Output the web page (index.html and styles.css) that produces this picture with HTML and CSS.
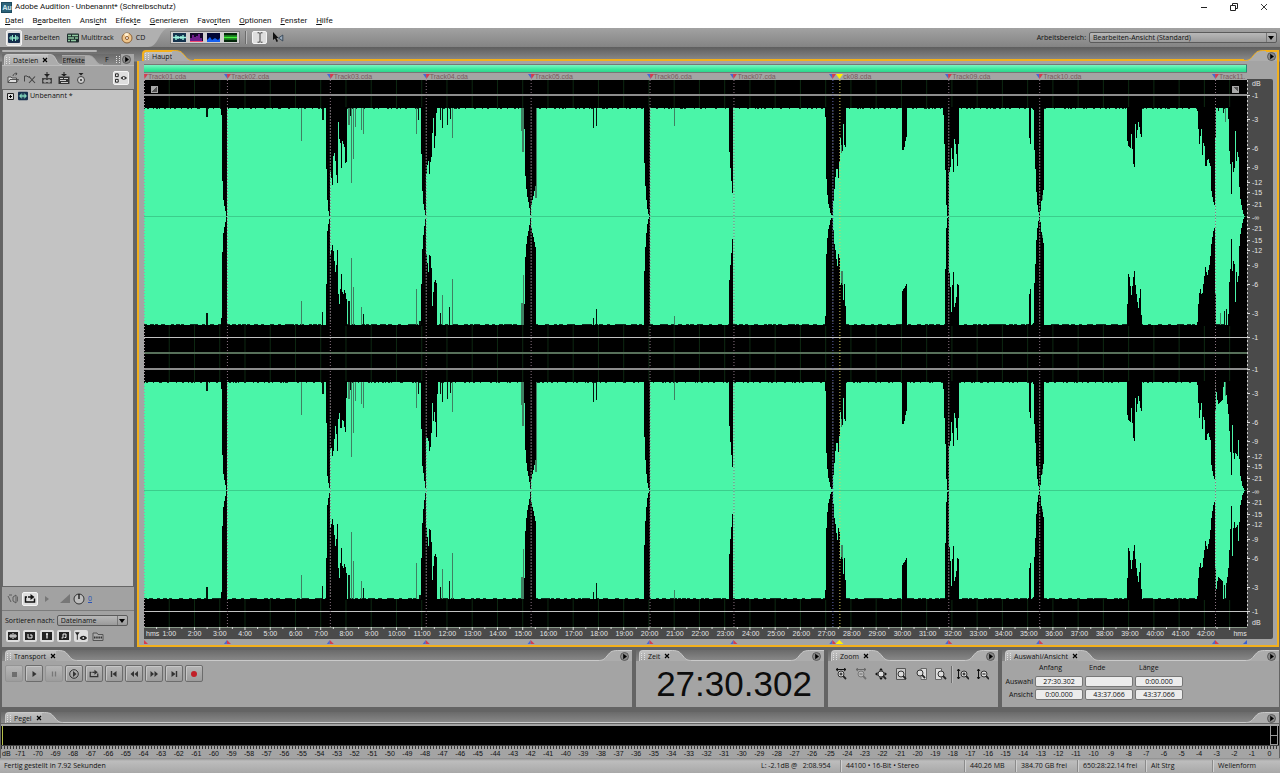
FILE: index.html
```html
<!DOCTYPE html>
<html lang="de">
<head>
<meta charset="utf-8">
<title>Adobe Audition - Unbenannt* (Schreibschutz)</title>
<link rel="stylesheet" href="styles.css">
</head>
<body>
<svg class="defs" aria-hidden="true">
  <symbol id="slope" viewBox="0 0 22 11" preserveAspectRatio="none"><path class="slope-fill" d="M0 .5C8 .5 9 1 13 6C16 10 18 10.5 22 10.5V11H0Z"/><path class="slope-line" d="M0 .5C8 .5 9 1 13 6C16 10 18 10.5 22 10.5"/></symbol>
  <symbol id="slope-r" viewBox="0 0 22 11" preserveAspectRatio="none"><path class="slope-fill" d="M22 .5C14 .5 13 1 9 6C6 10 4 10.5 0 10.5V11H22Z"/><path class="slope-line" d="M22 .5C14 .5 13 1 9 6C6 10 4 10.5 0 10.5"/></symbol>
  <symbol id="flyout" viewBox="0 0 9 9"><circle cx="4.500" cy="4.500" r="4" fill="#8a8a8a" stroke="#4c4c4c" stroke-width=".8"/><path d="M3.200 1.800L7 4.500L3.200 7.200Z" fill="#000"/></symbol>
  <symbol id="close" viewBox="0 0 6 6"><path d="M1 1L5 5M5 1L1 5" stroke="#000" stroke-width="1.200"/></symbol>
  <symbol id="wave" viewBox="0 0 12 10"><rect width="12" height="10" rx="1" fill="#17304e"/><path d="M1 5H11M3 3V7M4.500 2V8M6 4V6M7.500 2V8M9 3V7" stroke="#8fe8c8" stroke-width="1"/></symbol>
  <symbol id="multi" viewBox="0 0 12 9"><rect width="12" height="9" rx="1" fill="#1c2c2c"/><path d="M1 2H4M5 2H11M1 4.500H7M8 4.500H11M1 7H3M4 7H9" stroke="#8fc9a0" stroke-width="1.300"/></symbol>
  <symbol id="loop" viewBox="0 0 12 10"><path d="M3 3H1.500V8H10.500V4.500" fill="none" stroke="currentColor" stroke-width="1.500"/><path d="M4 3H7" stroke="currentColor" stroke-width="1.500"/><path d="M6.500 0L10.500 3L6.500 6Z" fill="currentColor"/></symbol>
  <symbol id="lens" viewBox="0 0 12 12"><circle cx="6" cy="6" r="3" fill="#ddd" stroke="#333"/><path d="M8.200 8.200L11 11" stroke="#222" stroke-width="1.800"/></symbol>
</svg>

<header class="titlebar">
  <svg class="logo" viewBox="0 0 11 11" aria-hidden="true"><rect width="11" height="11" fill="#1d4a5e"/><rect x="1" y="1" width="9" height="9" fill="#2d6379"/><text x="1.500" y="8" class="logo-text">Au</text></svg>
  <h1>Adobe Audition - Unbenannt* (Schreibschutz)</h1>
  <div class="winbtns">
    <button aria-label="Minimieren"><svg viewBox="0 0 8 8"><path d="M1 4.500H7" stroke="#222"/></svg></button>
    <button aria-label="Wiederherstellen"><svg viewBox="0 0 8 8"><path d="M.5 2.500H5.500V7.500H.5ZM2.500 2.500V.5H7.500V5.500H5.500" fill="none" stroke="#222"/></svg></button>
    <button aria-label="Schließen"><svg viewBox="0 0 8 8"><path d="M1 1L7 7M7 1L1 7" stroke="#222" stroke-width=".9"/></svg></button>
  </div>
</header>
<nav class="menubar">
  <button><u>D</u>atei</button><button>B<u>e</u>arbeiten</button><button>Ansi<u>c</u>ht</button><button>Effek<u>t</u>e</button><button><u>G</u>enerieren</button><button>Favo<u>r</u>iten</button><button><u>O</u>ptionen</button><button><u>F</u>enster</button><button><u>H</u>ilfe</button>
</nav>

<div class="toolbar">
  <div class="modes">
    <button class="mode"><span class="pressed"><svg class="i12"><use href="#wave"/></svg></span>Bearbeiten</button>
    <button class="mode"><svg class="i12"><use href="#multi"/></svg>Multitrack</button>
    <button class="mode cd"><svg class="i12" viewBox="0 0 12 12"><circle cx="6" cy="6" r="5" fill="#f0c58a" stroke="#8a6238"/><path d="M6 6L3 2A5 5 0 0 1 8 1.500Z" fill="#fff0d2"/><circle cx="6" cy="6" r="1.500" fill="#fff" stroke="#8a5a30"/></svg>CD</button>
  </div>
  <svg class="toolslope" viewBox="0 0 22 19" aria-hidden="true"><path d="M0 19C12 19 10 0 22 0H0Z" fill="#b0b0b0"/></svg>
  <div class="views">
    <button aria-label="Wellenform"><svg viewBox="0 0 13 9"><rect width="13" height="9" fill="#14324d"/><path d="M0 4.500H13M3 2V7M5 3V6M8 3V6M10 2V7" stroke="#9df5df" stroke-width="1.400"/></svg></button>
    <button aria-label="Spektrum"><svg viewBox="0 0 13 9"><rect width="13" height="9" fill="#120828"/><path d="M1 9V5M3 9V2M5 9V4M7 9V3M9 9V1M11 9V5" stroke="#a02cc0" stroke-width="1.300"/><path d="M0 8.500H13" stroke="#f04a70"/></svg></button>
    <button aria-label="Pan"><svg viewBox="0 0 13 9"><rect width="13" height="9" fill="#020835"/><path d="M0 7L3 4L5 7L8 5L11 7L13 5V9H0Z" fill="#1560f0"/></svg></button>
    <button aria-label="Phase"><svg viewBox="0 0 13 9"><rect width="13" height="9" fill="#04260a"/><path d="M0 4.500H13" stroke="#41f33c" stroke-width="2"/><path d="M0 2.500H13M0 6.500H13" stroke="#1b8a22" stroke-width=".8"/></svg></button>
  </div>
  <span class="divider"></span>
  <button class="pressed ibeam" aria-label="Zeitauswahl"><svg viewBox="0 0 10 11"><path d="M2.500 .8H4.300L5 1.500L5.700 .8H7.500M5 1.500V9.500M2.500 10.200H4.300L5 9.500L5.700 10.200H7.500" fill="none" stroke="#333" stroke-width=".9"/></svg></button>
  <button class="scrub" aria-label="Scrubben"><svg viewBox="0 0 12 11"><path d="M1 0V8L3 6.500L4.500 10L6 9.300L4.500 6H6.500Z" fill="#111"/><path d="M10.800 3V9L6.500 6Z" fill="#9ab" stroke="#345" stroke-width=".9"/></svg></button>
  <label class="workspace">Arbeitsbereich: <span class="select wide"><select><option>Bearbeiten-Ansicht (Standard)</option></select></span></label>
</div>

<main class="work">
  <section class="files">
    <div class="scrollhint"></div>
    <div class="filetabs">
      <div class="tab"><span class="grip"></span>Dateien <svg class="x"><use href="#close"/></svg></div><svg class="slope"><use href="#slope"/></svg>
      <button class="tab2">Effekte</button><svg class="slope dim"><use href="#slope"/></svg>
      <span class="tab3">F</span><span class="grip"></span><button class="fly" aria-label="Menü"><svg><use href="#flyout"/></svg></button>
    </div>
    <div class="filetools">
      <button aria-label="Importieren"><svg viewBox="0 0 12 12"><path d="M1 10.500V5H4L5 6H9.500V10.500ZM1 10.500L3 7.500H11.500L9.500 10.500" fill="#ddd" stroke="#444" stroke-width=".9"/><path d="M6 4C6 2 8 1 10 2L9 .5M10 2L8.500 3" fill="none" stroke="#444" stroke-width=".9"/></svg></button>
      <button aria-label="Schließen"><svg viewBox="0 0 12 12"><path d="M.5 9.500V4H3L4 5H6" fill="none" stroke="#444"/><path d="M5 4.500L11 11M11 4.500L5 11" stroke="#444" stroke-width="1.100"/></svg></button>
      <button aria-label="Bearbeiten"><svg viewBox="0 0 12 12"><path d="M3 2H9L6 5Z" fill="#222"/><path d="M6 0V6" stroke="#222"/><rect x="1" y="6" width="10" height="5.500" fill="#444"/><path d="M2 9H10M4 7V11M6 8V10M8 7V11" stroke="#ddd" stroke-width=".8"/></svg></button>
      <button aria-label="Einfügen"><svg viewBox="0 0 12 12"><path d="M3 2H9L6 4.500Z" fill="#222"/><path d="M6 0V4" stroke="#222"/><rect x=".5" y="4.500" width="11" height="7.500" fill="#333"/><path d="M2 6.500H5M6 6.500H10M2 8.500H8M3 10.500H10" stroke="#ccc"/></svg></button>
      <button aria-label="CD"><svg viewBox="0 0 12 12"><path d="M3.500 1H8.500L6 3.500Z" fill="#222"/><circle cx="6" cy="8" r="3.500" fill="#ccc" stroke="#444"/><circle cx="6" cy="8" r="1" fill="#333"/></svg></button>
      <button class="pressed opt" aria-label="Optionen"><svg viewBox="0 0 13 11"><path d="M.5 1H3.500V4H.5ZM.5 7H3.500V10H.5Z" fill="#eee" stroke="#111"/><path d="M6 5.500C8 3 11 3 13 5.500C11 8 8 8 6 5.500Z" fill="#333"/><circle cx="9.500" cy="5.500" r="1" fill="#fff"/></svg></button>
    </div>
    <div class="filelist"><div class="file"><svg class="plus" viewBox="0 0 7 7"><path d="M.5 .5H6.500V6.500H.5Z" fill="#ddd" stroke="#222"/><path d="M2 3.500H5M3.500 2V5" stroke="#000"/></svg><svg class="i10"><use href="#wave"/></svg>Unbenannt *</div></div>
    <div class="preview">
      <button aria-label="Auto-Wiedergabe"><svg viewBox="0 0 12 10"><path d="M1 2L4 8M2 1H5M6 3L9 1V9L6 7Z" stroke="#555" fill="none" stroke-width=".9"/><path d="M10.500 2.500V7.500" stroke="#666"/></svg></button>
      <button class="pressed" aria-label="Schleife"><svg class="i10"><use href="#loop"/></svg></button>
      <button aria-label="Wiedergabe"><svg viewBox="0 0 12 10"><path d="M4 2L8 5L4 8Z" fill="#777"/></svg></button>
      <svg class="vol" viewBox="0 0 10 9"><path d="M0 9H10V0Z" fill="#777"/></svg>
      <svg class="knob" viewBox="0 0 12 12"><circle cx="6" cy="6" r="5" fill="#bdbdbd" stroke="#333"/><path d="M6 1V6" stroke="#111" stroke-width="1.300"/></svg>
      <a href="#gain">0</a>
    </div>
    <div class="sort"><label for="sort">Sortieren nach:</label><span class="select"><select id="sort"><option>Dateiname</option></select></span></div>
    <div class="filters">
      <button aria-label="Audio"><svg viewBox="0 0 10 8"><rect width="10" height="8" fill="#222"/><path d="M1 4H9M3 2V6M5 1V7M7 2V6" stroke="#eee"/></svg></button>
      <button aria-label="Loops"><svg viewBox="0 0 10 8"><rect width="10" height="8" fill="#222"/><path d="M3 2V6H7V3H5" stroke="#eee" fill="none"/></svg></button>
      <button aria-label="Video"><svg viewBox="0 0 10 8"><rect width="10" height="8" fill="#222"/><path d="M5 1.500V6.500M4 2H6" stroke="#eee" stroke-width="1.300"/></svg></button>
      <button aria-label="MIDI"><svg viewBox="0 0 10 8"><rect width="10" height="8" fill="#222"/><path d="M4 6V2H7V5.500M2.500 6H4M5.500 5.500H7" stroke="#eee" fill="none"/></svg></button>
      <button class="mark" aria-label="Marken"><svg viewBox="0 0 13 9"><path d="M0 0H5L3 3V8H2V3Z" fill="#222"/><path d="M5 6C7 3 11 3 13 6C11 9 7 9 5 6Z" fill="#222"/><circle cx="9" cy="6" r="1" fill="#eee"/></svg></button>
      <button class="plain" aria-label="Pfad"><svg viewBox="0 0 12 9"><path d="M1 8.500V1H5L6 2.500H11V8.500Z" fill="#aaa" stroke="#555"/><path d="M2 5.500H10" stroke="#333" stroke-width="2" stroke-dasharray="1.500 .7"/></svg></button>
    </div>
  </section>

  <section class="wavepanel">
    <div class="head">
      <div class="tab"><span class="grip"></span>Haupt</div><svg class="slope"><use href="#slope"/></svg>
      <div class="fill"></div>
      <svg class="slope"><use href="#slope-r"/></svg><div class="tail"><button class="fly" aria-label="Menü"><svg><use href="#flyout"/></svg></button></div>
    </div>
    <div class="wavebody">
      <div class="wavecol">
        <div class="overview"><div class="overview-bar"></div></div>
        <div class="tracks" id="tracks"></div>
        <svg class="plot" id="plot" viewBox="0 0 1104 547" preserveAspectRatio="none" role="img" aria-label="Wellenform"></svg>
        <svg class="ticks" id="ticks" viewBox="0 0 1104 3" preserveAspectRatio="none"></svg>
        <div class="timeruler" id="timeruler"></div>
      </div>
      <div class="dbcol"><svg class="dbticks" id="dbticks" viewBox="0 0 5 547" preserveAspectRatio="none"></svg><div class="dbscale" id="dbscale"></div></div>
      <svg class="cues" id="cues" viewBox="0 0 1104 6" preserveAspectRatio="none"></svg>
    </div>
  </section>
</main>

<div class="lower">
  <section class="panel transport">
    <div class="head"><div class="tab"><span class="grip"></span>Transport <svg class="x"><use href="#close"/></svg></div><svg class="slope"><use href="#slope"/></svg><div class="fill"></div><svg class="slope"><use href="#slope-r"/></svg><div class="tail"><button class="fly" aria-label="Menü"><svg><use href="#flyout"/></svg></button></div></div>
    <div class="body">
      <button disabled aria-label="Stopp"><svg viewBox="0 0 10 10"><path d="M3 3H8V8H3Z" fill="#6e6e6e"/></svg></button>
      <button aria-label="Wiedergabe"><svg viewBox="0 0 10 10"><path d="M3.500 2L7.500 5L3.500 8Z" fill="#333"/></svg></button>
      <button disabled aria-label="Pause"><svg viewBox="0 0 10 10"><path d="M3.500 2.500V7.500M6.500 2.500V7.500" stroke="#777" stroke-width="1.300"/></svg></button>
      <button aria-label="Wiedergabe bis Ende"><svg viewBox="0 0 10 10"><circle cx="5" cy="5" r="4.300" fill="none" stroke="#333"/><path d="M4 2L7.500 5L4 8Z" fill="#333"/></svg></button>
      <button aria-label="Schleife"><svg><use href="#loop"/></svg></button>
      <button aria-label="Anfang"><svg viewBox="0 0 10 10"><path d="M2.500 2V8" stroke="#333" stroke-width="1.400"/><path d="M7.500 2V8L3.500 5Z" fill="#333"/></svg></button>
      <button aria-label="Rückspulen"><svg viewBox="0 0 10 10"><path d="M5 2V8L1.500 5ZM9 2V8L5.500 5Z" fill="#333"/></svg></button>
      <button aria-label="Vorspulen"><svg viewBox="0 0 10 10"><path d="M1.500 2V8L5 5ZM5.500 2V8L9 5Z" fill="#333"/></svg></button>
      <button aria-label="Ende"><svg viewBox="0 0 10 10"><path d="M2.500 2V8L6.500 5Z" fill="#333"/><path d="M7.500 2V8" stroke="#333" stroke-width="1.400"/></svg></button>
      <button aria-label="Aufnahme"><svg viewBox="0 0 10 10"><circle cx="5" cy="5" r="3" fill="#c11f28"/></svg></button>
    </div>
  </section>
  <section class="panel time">
    <div class="head"><div class="tab"><span class="grip"></span>Zeit <svg class="x"><use href="#close"/></svg></div><svg class="slope"><use href="#slope"/></svg><div class="fill"></div><svg class="slope"><use href="#slope-r"/></svg><div class="tail"><button class="fly" aria-label="Menü"><svg><use href="#flyout"/></svg></button></div></div>
    <div class="body"><output>27:30.302</output></div>
  </section>
  <section class="panel zoom">
    <div class="head"><div class="tab"><span class="grip"></span>Zoom <svg class="x"><use href="#close"/></svg></div><svg class="slope"><use href="#slope"/></svg><div class="fill"></div><svg class="slope"><use href="#slope-r"/></svg><div class="tail"><button class="fly" aria-label="Menü"><svg><use href="#flyout"/></svg></button></div></div>
    <div class="body">
      <button aria-label="Horizontal einzoomen"><svg viewBox="0 0 12 12"><path d="M1 1.500H11M3 0L1 1.500L3 3M9 0L11 1.500L9 3" fill="none" stroke="#111"/><use href="#lens"/><path d="M4.500 6H7.500M6 4.500V7.500" stroke="#111"/></svg></button>
      <button class="off" aria-label="Horizontal auszoomen"><svg viewBox="0 0 12 12"><path d="M1 1.500H11M3 0L1 1.500L3 3M9 0L11 1.500L9 3" fill="none" stroke="#111"/><use href="#lens"/><path d="M4.500 6H7.500" stroke="#111"/></svg></button>
      <button aria-label="Ganz auszoomen"><svg viewBox="0 0 12 12"><use href="#lens"/><path d="M6 0L8 2.500H4ZM6 12L8 9.500H4ZM0 6L2.500 4V8ZM12 6L9.500 4V8Z" fill="#111"/></svg></button>
      <button aria-label="Auswahl"><svg viewBox="0 0 12 12"><path d="M1.500 .5H10.500V11.500H1.500Z" fill="#c8c8c8" stroke="#555"/><use href="#lens"/></svg></button>
      <button aria-label="Linker Rand"><svg viewBox="0 0 12 12"><path d="M6 .5H11.500V11.500H6Z" fill="#ddd" stroke="#666"/><use href="#lens" x="-1" y="-1"/></svg></button>
      <button aria-label="Rechter Rand"><svg viewBox="0 0 12 12"><path d="M.5 .5H6.500V11.500H.5Z" fill="#ddd" stroke="#666"/><use href="#lens"/></svg></button>
      <span class="divider"></span>
      <button aria-label="Vertikal einzoomen"><svg viewBox="0 0 12 12"><path d="M1.500 1V11M0 3L1.500 1L3 3M0 9L1.500 11L3 9" fill="none" stroke="#111"/><use href="#lens" x="1"/><path d="M5.500 6H8.500M7 4.500V7.500" stroke="#111"/></svg></button>
      <button aria-label="Vertikal auszoomen"><svg viewBox="0 0 12 12"><path d="M1.500 1V11M0 3L1.500 1L3 3M0 9L1.500 11L3 9" fill="none" stroke="#111"/><use href="#lens" x="1"/><path d="M5.500 6H8.500" stroke="#111"/></svg></button>
    </div>
  </section>
  <section class="panel selection">
    <div class="head"><div class="tab"><span class="grip"></span>Auswahl/Ansicht <svg class="x"><use href="#close"/></svg></div><svg class="slope"><use href="#slope"/></svg><div class="fill"></div><svg class="slope"><use href="#slope-r"/></svg><div class="tail"><button class="fly" aria-label="Menü"><svg><use href="#flyout"/></svg></button></div></div>
    <div class="body">
      <span></span><span class="col">Anfang</span><span class="col">Ende</span><span class="col">Länge</span>
      <label for="s1">Auswahl</label><input id="s1" value="27:30.302"><input aria-label="Auswahl Ende" value=""><input aria-label="Auswahl Länge" value="0:00.000">
      <label for="v1">Ansicht</label><input id="v1" value="0:00.000"><input aria-label="Ansicht Ende" value="43:37.066"><input aria-label="Ansicht Länge" value="43:37.066">
    </div>
  </section>
</div>

<section class="panel level">
  <div class="head"><div class="tab"><span class="grip"></span>Pegel <svg class="x"><use href="#close"/></svg></div><svg class="slope"><use href="#slope"/></svg><div class="fill"></div><svg class="slope"><use href="#slope-r"/></svg><div class="tail"><button class="fly" aria-label="Menü"><svg><use href="#flyout"/></svg></button></div></div>
  <div class="meter"><span class="meter-start"></span><span class="clip"><i></i><i></i></span></div>
  <div class="lvticks"></div>
  <div class="lvscale" id="lvscale"></div>
</section>

<footer class="status">
  <span class="msg">Fertig gestellt in 7.92 Sekunden</span>
  <span class="st-level">L: -2.1dB @ &nbsp; 2:08.954</span>
  <span class="st-format">44100 • 16-Bit • Stereo</span>
  <span class="st-size">440.26 MB</span>
  <span class="st-free">384.70 GB frei</span>
  <span class="st-time">650:28:22.14 frei</span>
  <span class="st-key">Alt Strg</span>
  <span class="st-view">Wellenform</span>
</footer>
<script src="script.js"></script>
</body>
</html>
```

FILE: styles.css
```css
* { box-sizing: border-box; }
html { height: 100%; }
body {
  margin: 0; min-height: 100%; display: flex; flex-direction: column;
  background: #646464; color: #111;
  font: 7px/10px "Open Sans", "Noto Sans", sans-serif;
}
button, input, select { font: inherit; color: inherit; }
button { border: 0; padding: 0; margin: 0; background: none; display: inline-flex; align-items: center; justify-content: center; }
svg { display: block; flex: none; }
.defs { position: absolute; width: 0; height: 0; }
.i12 { width: 12px; height: 12px; }
.i10 { width: 10px; height: 10px; }

.titlebar { height: 14px; background: #fff; display: flex; align-items: center; padding-left: 1px; }
.logo { width: 11px; height: 11px; margin-right: 3px; }
.logo-text { font: bold 7px "Open Sans", sans-serif; fill: #cfe6ee; }
.titlebar h1 { margin: 0; flex: 1; font: 400 8px/14px Roboto, "Open Sans", sans-serif; }
.winbtns { display: flex; gap: 22px; padding-right: 12px; }
.winbtns svg { width: 8px; height: 8px; }
.menubar { height: 14px; background: #fff; display: flex; gap: 9px; padding: 0 5px; font: 8px/14px Roboto, "Open Sans", sans-serif; }
.menubar button { display: inline-block; line-height: 14px; }

.toolbar { height: 19px; display: flex; align-items: center; background: linear-gradient(#a2a2a2, #848484); }
.modes { align-self: stretch; display: flex; align-items: center; gap: 7px; padding: 0 3px 0 6px; background: #b0b0b0; }
.mode { gap: 2px; }
.mode.cd { gap: 3px; }
.pressed { background: #dedede; border: 1px solid #f4f4f4; border-radius: 2px; display: inline-flex; align-items: center; justify-content: center; }
.mode .pressed { padding: 1px; }
.toolslope { width: 22px; height: 19px; }
.views { display: flex; border: 1px solid #777; background: #cfcfcf; }
.views button { width: 17px; height: 11px; }
.views svg { width: 13px; height: 9px; }
.divider { width: 2px; height: 13px; border-left: 1px solid #6b6b6b; border-right: 1px solid #bbb; }
.toolbar .divider { margin: 0 5px; }
.ibeam { width: 15px; height: 13px; }
.ibeam svg, .scrub svg { width: 12px; height: 11px; }
.scrub { margin-left: 5px; }
.workspace { margin-left: auto; display: flex; align-items: center; gap: 3px; padding-right: 3px; }
.select { display: flex; position: relative; border: 1px solid #5b5b5b; border-radius: 2px; background: linear-gradient(#b8b8b8, #9a9a9a); }
.select select { appearance: none; border: 0; margin: 0; padding: 0 12px 0 3px; width: 100%; height: 9px; line-height: 9px; background: none; }
.select::after { content: ""; position: absolute; right: 2px; top: 3px; border: 3px solid transparent; border-top: 4px solid #000; border-bottom: 0; }
.select::before { content: ""; position: absolute; right: 9px; top: 0; bottom: 0; border-left: 1px solid #777; }
.select.wide { width: 188px; }

.work { flex: 1; display: flex; gap: 3px; padding: 3px 1px 2px 2px; background: linear-gradient(#5e5e5e, #8c8c8c 14px, #646464 15px); }
.files { width: 132px; display: flex; flex-direction: column; }
.scrollhint { width: 95px; height: 2px; background: #b5b5b5; border-radius: 1px; margin-bottom: 2px; }
.filetabs { height: 11px; display: flex; align-items: flex-end; background: linear-gradient(#6a6a6a, #8a8a8a); }
.grip { width: 4px; height: 7px; margin-right: 3px; border: 1px dotted #e2e2e2; border-width: 0 1px; }
.tab { height: 11px; padding-left: 1px; display: flex; align-items: center; background: linear-gradient(#c2c2c2, #a6a6a6); border: 1px solid #cacaca; border-width: 1px 0 0 1px; border-radius: 4px 0 0 0; line-height: 9px; }
.x { width: 6px; height: 6px; margin-left: 4px; }
.slope { width: 22px; height: 11px; color: #cacaca; }
.slope-fill { fill: #acacac; }
.slope-line { fill: none; stroke: currentColor; stroke-width: 1; }
.files .tab { margin-left: 2px; }
.files .slope { width: 14px; }
.files .dim { width: 18px; height: 10px; color: #aaa; }
.dim .slope-fill, .dim { fill: #8e8e8e; }
.tab2 { height: 10px; background: #8e8e8e; border-top: 1px solid #aaa; line-height: 9px; }
.tab3 { flex: 1; padding-left: 2px; }
.filetabs > .grip { margin: 0 1px 2px; }
.fly svg { width: 9px; height: 9px; }
.filetabs .fly { padding: 1px 3px 1px 1px; background: #a6a6a6; }
.filetools { height: 24px; display: flex; align-items: center; gap: 5px; padding: 0 5px; background: #a2a2a2; border-top: 1px solid #bcbcbc; }
.filetools svg { width: 12px; height: 12px; }
.filetools .opt { margin-left: auto; padding: 0 1px; }
.filelist { flex: 1; background: #c3c3c3; border: 1px solid #666; }
.file { display: flex; align-items: center; gap: 2px; padding: 1px 4px; line-height: 10px; }
.plus { width: 7px; height: 7px; }
.file .plus { margin-right: 2px; }
.preview { height: 24px; display: flex; align-items: center; gap: 3px; padding: 0 5px; background: #a2a2a2; border-bottom: 1px solid #7c7c7c; }
.preview button svg { width: 12px; height: 10px; }
.preview .pressed { padding: 1px; }
.vol { width: 10px; height: 9px; margin-left: 4px; }
.knob { width: 12px; height: 12px; }
.preview a { color: #2952b8; }
.sort { display: flex; align-items: center; gap: 2px; padding: 4px 6px 4px 3px; background: #a2a2a2; }
.sort .select { flex: 1; }
.filters { height: 17px; display: flex; gap: 3px; padding: 0 4px 5px; background: #a2a2a2; }
.filters button { width: 14px; height: 12px; background: #dedede; border-radius: 2px; }
.filters svg { width: 10px; height: 8px; }
.filters .mark svg, .filters .plain svg { width: 12px; height: 9px; }
.filters .plain { background: none; }

.head { display: flex; height: 11px; background: linear-gradient(#6a6a6a, #8a8a8a); }
.fill { flex: 1; border-bottom: 1px solid #cacaca; }
.tail { border-top: 1px solid #cacaca; background: #acacac; padding: 0 3px 0 0; display: flex; }
.wavepanel { flex: 1; min-width: 0; display: flex; flex-direction: column; }
.wavepanel .head { margin-left: 5px; background: none; }
.wavepanel .tab { border-color: #f3b01c; border-width: 2px 0 0 2px; }
.wavepanel .slope { color: #f3b01c; }
.wavepanel .slope-line { stroke-width: 2; }
.wavepanel .fill { border-bottom: 2px solid #f3b01c; }
.wavepanel .tail { border: 2px solid #f3b01c; border-width: 2px 2px 0 0; padding: 0 1px; }
.wavebody { flex: 1; display: grid; grid-template-columns: 1fr 26px; grid-template-rows: 1fr 6px; padding: 3px 4px 0 5px; background: #a4a4a4; border: 2px solid #f3b01c; border-top: 0; }
.wavecol { min-width: 0; display: flex; flex-direction: column; }
.overview { height: 9px; padding: 1px 0; background: #777; }
.overview-bar { height: 7px; background: linear-gradient(#7cf5c2, #3be89c 60%, #2fd48c); border-right: 1px solid #287; }
.tracks { height: 7px; display: flex; color: #7a5a5c; font: 7px/7px "Liberation Sans", Arial, sans-serif; }
.track { flex: 1 1 0; min-width: 0; display: flex; white-space: nowrap; }
.track svg { width: 7px; height: 5px; margin-top: 1px; margin-left: -3px; }
.plot { width: 100%; flex: 1 1 0; min-height: 0; height: 0; background: #000; }
.ticks { width: 100%; height: 3px; background: #4a4a4a; }
.timeruler { height: 9px; display: flex; background: #4a4a4a; color: #e4e4e4; font: 7px/8px "Liberation Sans", Arial, sans-serif; }
.timeruler span { flex: 1 1 0; min-width: 0; display: flex; justify-content: center; }
.timeruler .first { flex-grow: .5; justify-content: flex-start; text-indent: 2px; }
.timeruler .last { flex-grow: 1.117; justify-content: flex-end; }
.dbcol { display: flex; margin-top: 15px; background: #4a4a4a; color: #e4e4e4; border-radius: 0 2px 2px 0; font: 7px/8px "Liberation Sans", Arial, sans-serif; padding: 1px 0 12px; }
.dbticks { width: 5px; height: 100%; }
.dbscale { flex: 1; display: flex; flex-direction: column; }
.dbscale span { height: 0; line-height: 0; }
.cues { width: 100%; height: 6px; overflow: visible; }

.lower { display: grid; grid-template-columns: 630fr 188fr 170fr 277fr; gap: 4px; padding: 1px 1px 0 2px; }
.panel { min-width: 0; display: flex; flex-direction: column; }
.lower .body { height: 46px; background: #a4a4a4; display: flex; }
.lower .tab { margin-left: 3px; }
.transport .body { padding: 4px 3px; gap: 2px; }
.transport .body button { width: 18px; height: 17px; background: linear-gradient(#b6b6b6, #9c9c9c); border: 1px solid #6c6c6c; border-radius: 2px; box-shadow: inset 1px 1px #c6c6c6; }
.transport .body button:disabled { border-color: #949494; box-shadow: none; }
.transport .body svg { width: 10px; height: 10px; color: #333; }
.time .body { justify-content: center; padding-left: 8px; }
.time output { font: 35px/46px "Liberation Sans", Arial, sans-serif; color: #0c0c0c; }
.zoom .body { padding: 7px 7px; gap: 8px; align-items: flex-start; }
.zoom .body svg { width: 12px; height: 12px; }
.zoom .divider { margin: -2px -4px 0; height: 17px; }
.off { opacity: .4; }
.selection .body { display: grid; grid-template-columns: 31px 48px 48px 48px; grid-template-rows: 12px 11px 11px; gap: 2px; padding: 1px 0; justify-content: start; align-items: center; }
.selection label { text-align: right; }
.selection .col { padding-left: 4px; }
.selection input { width: 48px; height: 11px; padding: 0; text-align: center; border: 1px solid #777; border-radius: 2px; background: #ececec; line-height: 9px; }

.level { margin: 5px 1px 0 1px; }
.level .tab { margin-left: 4px; }
.meter { height: 22px; border-top: 2px solid #a4a4a4; border-bottom: 1px solid #444; background: #000; margin-top: 1px; display: flex; justify-content: space-between; padding: 0 1px; }
.meter-start { width: 2px; border-left: 1px solid #b5bf4a; }
.clip { width: 8px; display: flex; flex-direction: column; border: 1px solid #999; border-width: 0 1px; }
.clip i { flex: 1; border-bottom: 1px solid #999; }
.lvticks { height: 3px; background: repeating-linear-gradient(90deg, #333 0 1px, #a4a4a4 1px 3px); }
.lvscale { height: 9px; display: flex; padding-right: 1px; background: #a4a4a4; font: 7px/9px "Liberation Sans", Arial, sans-serif; }
.lvscale span { flex: 1 1 0; min-width: 0; text-align: center; }
.lvscale .first { flex-grow: .6; }

.status { height: 15px; display: flex; align-items: center; background: linear-gradient(#8c8c8c, #bdbdbd 3px, #a8a8a8); }
.status span { border-left: 1px solid #d0d0d0; box-shadow: -1px 0 #8a8a8a; padding-left: 4px; white-space: nowrap; line-height: 12px; }
.status .msg { flex: 1; border: 0; box-shadow: none; }
.status .st-level { width: 80px; border: 0; box-shadow: none; padding: 0; }
.st-format { width: 124px; }
.st-size { width: 51px; }
.st-free { width: 62px; }
.st-time { width: 68px; }
.st-key { width: 67px; }
.st-view { width: 67px; }
```

FILE: script.js
```js
const NS = "http://www.w3.org/2000/svg";
const X0 = 144, Y0 = 80, MIN = 25.27, LEVEL = 108;
const GREEN = "#4af5a8", SHADE = "#3f8062";

function shape(parent, name, attrs) {
  const el = document.createElementNS(NS, name);
  for (const key in attrs) el.setAttribute(key, attrs[key]);
  parent.appendChild(el);
  return el;
}

/* Dips of the envelope, as "x,depth" pairs; depth is measured from full level to the centre line. */
const common = [
  "221.5,0 222,40 222.5,70 223,88 225,100 226.5,108 227,108 227,0",
  "524.5,0 525.3,47 526,73 527.5,87 529.5,97 531,108 531,101 532.5,94 534.5,85 536,77 536.5,0",
  "644,0 644.5,37 645.3,67 646.7,90 648.3,104 649.7,108 650,108 650,0",
  "729.3,0 730,44 731.3,64 732.7,80 734,100 734,0",
  "1029.3,0 1030.7,42 1032,29 1032,0",
  "1034.3,0 1034.7,35 1036,49 1036.7,75 1038,95 1040,108 1041,107 1042,95 1043.7,85 1044.7,80 1044.7,0"
];
const upper = [
  "826,0 826.7,50 827.3,79 829,95 831.7,107 833.3,107 834,94 835.7,75 836.7,62 838,59 839,72 840,59 841,29 843.3,44 844.3,11 845.3,42 846.3,39 847,0",
  "902.7,0 903,42 904,43 905.3,39 906.7,30 908,28 908,0",
  "944,0 945,30 946,55 946.7,75 947.3,99 948.3,108 949.3,108 949.7,67 951.3,59 952.3,39 954.3,65 955,29 956.7,39 958.7,63 960,0",
  "1128,0 1128.7,57 1130,22 1130.7,50 1132.7,22 1133.7,49 1135.3,65 1136.3,14 1137.7,34 1139,12 1141.3,24 1142.3,42 1142.7,0",
  "1198.3,0 1199.3,19 1200.7,40 1202.3,15 1203.3,49 1205,29 1206.7,62 1209,49 1211.7,59 1212.3,82 1214,92 1216,99 1216.7,0"
];
const lower = [
  "826,0 826.7,50 827.3,79 829,95 831.7,107 833.3,107 834,97 835,82 836.7,71 838,57 839,72 840.7,64 841,40 843,43 844,22 845,44 847,0",
  "902.7,0 903,34 905.3,37 907.3,41 908,0",
  "945.5,0 946.3,60 947.3,99 948.3,108 949.3,108 949.7,59 951.3,37 952.3,12 954,62 955.3,16 957.7,31 959,54 960,0",
  "1128,0 1129,52 1130.7,47 1132.3,29 1135.3,56 1136.7,36 1139.3,16 1141.7,39 1142.7,0",
  "1198.3,0 1200,30 1201.5,36 1203,28 1205,45 1206.7,60 1208,48 1211,62 1212.3,80 1214,92 1216,99 1216.7,0"
];
const tailOne = "1229.3,0 1230,39 1231.3,50 1232.7,92 1233.3,52 1235.3,72 1236.3,17 1237.7,59 1239,34 1240.7,85 1242,95 1244,104 1245.3,108 1248,108 1248,0";
const tailTwo = "1217,0 1217.7,15 1219.5,22 1223.5,18 1224.3,0 1226.7,0 1227.7,16 1229.3,28 1231,58 1232.7,98 1233.7,30 1234.7,81 1236.7,70 1238.5,74 1239.7,55 1241,91 1243.3,103 1245.3,108 1248,108 1248,0";
const track3 = [
  "326,0 326.5,50 327,80 328,98 329.5,108 330,108 330,60 332,72 333,80 333,65 334,40 335.5,50 337.5,78 338.5,60 338.5,10 339.5,30 341,36 341.5,67 342.5,32 345,40 346,62 347,50 347,0",
  "326,0 327,61 327.7,95 330,108 330,70 332,65 333,78 336,40 338,74 339,20 341,51 343,35 344,41 346,52 347,0",
  "326,0 327,61 327.7,95 330,108 330,68 333,81 336,50 338,79 339,10 341.7,51 343,28 345,36 346.7,26 347,0"
];
const track4 = [
  "421,0 422,60 422.5,80 424,99 426,108 426.5,68 428.5,50 430,69 431,49 432,49 433.5,2 435,47 436,22 437,0",
  "421,0 422.3,80 424,93 426,108 426.5,56 428.5,56 430,71 431.7,58 432.3,0 433.3,43 435,28 437,58 438,0",
  "421,0 422.3,70 424,93 426,108 426.5,73 429,51 430,76 431.7,60 432.7,18 434.5,43 436.7,46 437.7,0"
];
/* Thin transients: x, width, depth, shaded. */
const hairTop = [[206,2,9,0],[301,1,33,1],[322,2,12,0],[348,2,17,1],[350,1,8,0],[351,1,75,1],[353,1,51,1],[355,1,19,1],[361,1,22,1],[363,1,26,1],[416,1,26,1],[418,1,12,0],[440,1,12,0],[442,1,20,0],[447,1,17,0],[450,1,11,0],[452,1,30,1],[521,1,23,1],[522,2,44,1],[593,1,20,0],[596,1,18,0],[674,1,18,1],[535,2,90,1],[842,1,45,1],[1043,1,92,1],[1219,1,3,0],[1224,1,5,0],[1226,1,14,1]];
const hairBottom = [[206,2,12,0],[301,1,24,1],[322,1,13,0],[348,2,24,0],[351,1,67,1],[353,1,38,1],[361,1,18,1],[363,1,11,0],[416,1,36,1],[419,2,4,0],[440,1,12,0],[442,1,30,1],[449,1,18,0],[452,1,46,1],[521,2,22,1],[523,1,50,1],[593,1,7,0],[596,1,16,0],[674,1,9,1],[842,2,54,1],[1043,1,90,1],[1221,1,12,1],[1225,1,14,0],[1227,1,16,0]];

const plot = document.getElementById("plot");
const art = shape(plot, "g", { "shape-rendering": "crispEdges" });
for (let m = 1; m < 44; m++) shape(art, "path", { d: `M${m * MIN} 0V547`, stroke: "#0d2812" });
const dbOffsets = [12, 24, 33, 49.5, 68, 97];
for (const c of [136.5, 410.5]) {
  for (const o of dbOffsets) for (const s of [-1, 1]) shape(art, "path", { d: `M0 ${c + s * o}H1104`, stroke: "#0d2812" });
  shape(art, "path", { d: `M0 ${c}H1104`, stroke: "#0d2812" });
}

function quadrant(centre, dir, dips, hairs, seed) {
  const y = d => centre - Y0 - dir * (LEVEL - d);
  shape(art, "rect", { x: 0, y: Math.min(y(0), y(108)), width: 1104, height: LEVEL, fill: GREEN });
  let s = seed;
  for (let x = 0; x < 1100; x += 2 + s % 9) {
    s = (s * 1103 + 12345) % 65536;
    shape(art, "rect", { x, y: dir > 0 ? y(0) : y(1), width: 1 + s % 4, height: 1, fill: "#0a3020" });
  }
  for (const [x, w, d, shaded] of hairs)
    shape(art, "rect", { x: x - X0, y: Math.min(y(0), y(d)), width: w, height: d, fill: shaded ? SHADE : "#04140c" });
  for (const dip of dips) {
    const pts = dip.split(" ").map(p => p.split(",").map(Number));
    const first = pts[0][0], last = pts[pts.length - 1][0];
    const line = [[first, -1], ...pts, [last, -1]].map(([px, d]) => `${px - X0},${y(d)}`).join(" ");
    shape(art, "polygon", { points: line, fill: "#000" });
  }
}
quadrant(216, 1, [...common, ...upper, track3[0], track4[0], tailOne], hairTop, 17);
quadrant(217, -1, [...common, ...lower, track3[2], track4[2], tailOne], hairBottom, 91);
quadrant(490, 1, [...common, ...upper, track3[1], track4[1], tailTwo], hairTop, 233);
quadrant(491, -1, [...common, ...lower, track3[2], track4[2], tailTwo], hairBottom, 407);

for (const y of [95, 369]) shape(art, "path", { d: `M0 ${y - Y0}H1104`, stroke: "#8c8c8c", "stroke-width": 2 });
for (const y of [337.5, 611.5]) shape(art, "path", { d: `M0 ${y - Y0}H1104`, stroke: "#c4c4c4" });
shape(art, "path", { d: "M0 273H1104", stroke: "#57705a", "stroke-width": 2 });
for (const y of [136.5, 410.5]) shape(art, "path", { d: `M0 ${y}H1102`, stroke: "#3bcf8d" });
const starts = [144, 227, 330, 426, 531, 650, 734, 833, 949, 1040, 1216];
starts.slice(1).forEach(x => {
  shape(art, "path", { d: `M${x - X0 + .5} 0V547`, stroke: x === 833 ? "#6468b0" : "#8c7484", "stroke-dasharray": "1 2" });
  shape(art, "path", { d: `M${x - X0 + .5} 28V244M${x - X0 + .5} 302V518`, stroke: "#c8d8cc", "stroke-dasharray": "1 2", opacity: ".5" });
});
shape(art, "path", { d: "M.5 0V547", stroke: "#a89aa0", "stroke-dasharray": "1 2" });
shape(art, "path", { d: "M696.5 0V547", stroke: "#d8cf62", "stroke-dasharray": "1 2" });
for (const [x, flip] of [[7, 0], [1089, 1]]) {
  shape(art, "rect", { x, y: 6, width: 7, height: 7, fill: "#a8a8a8" });
  shape(art, "path", { d: flip ? `M${x + 1} 7H${x + 6}V12Z` : `M${x + 6} 7V12H${x + 1}Z`, fill: "#555" });
}

const marks = document.getElementById("tracks");
starts.forEach((x, i) => {
  const end = starts[i + 1] || 1248;
  const item = document.createElement("span");
  item.className = "track";
  item.style.flexGrow = end - x;
  const icon = shape(item, "svg", { viewBox: "0 0 7 5" });
  if (i) shape(icon, "path", { d: "M0 0H3.500V5Z", fill: "#4a68d0" });
  shape(icon, "path", { d: "M3 0H7L3.500 5Z", fill: "#d43c50" });
  if (i === 7) {
    const cursor = shape(item, "svg", { viewBox: "0 0 7 5" });
    shape(cursor, "path", { d: "M0 0H7L3.500 5Z", fill: "#fff200" });
    cursor.style.marginLeft = "0";
  }
  item.append(i === 7 ? "ck08.cda" : "Track" + String(i + 1).padStart(2, "0") + (i === 10 ? "." : ".cda"));
  marks.appendChild(item);
});

const cues = document.getElementById("cues");
starts.forEach((x, i) => {
  if (i) shape(cues, "path", { d: `M${x - X0 - 3} 5H${x - X0}V1Z`, fill: "#4a68d0" });
  shape(cues, "path", { d: `M${x - X0} 1V5H${x - X0 + 4}Z`, fill: "#d43c50" });
});
shape(cues, "path", { d: "M692 5L696 1L700 5Z", fill: "#fff200" });
shape(cues, "path", { d: "M1100 5L1104 1V5Z", fill: "#3a60d0" });

const ticks = document.getElementById("ticks");
shape(ticks, "path", { d: "M0 .5H1104", stroke: "#8a9a8a" });
for (let i = 1; i < 87; i++) shape(ticks, "path", { d: `M${i * MIN / 2} 0V${i % 2 ? 2 : 3}`, stroke: "#ddd" });
const ruler = document.getElementById("timeruler");
for (let i = 0; i < 44; i++) {
  const s = document.createElement("span");
  s.textContent = i === 0 || i === 43 ? "hms" : i + ":00";
  if (i === 0) s.className = "first";
  if (i === 43) s.className = "last";
  ruler.appendChild(s);
}

const dbticks = document.getElementById("dbticks");
shape(dbticks, "path", { d: "M.5 0V547", stroke: "#ccc", "stroke-dasharray": "2 2" });
const scale = document.getElementById("dbscale");
const labels = [[84, "dB"]];
const half = [["-1", 121], ["-3", 97], ["-6", 68], ["-9", 49], ["-12", 34], ["-15", 24], ["-21", 12]];
for (const c of [217, 491]) {
  half.forEach(([t, o]) => labels.push([c - o, t]));
  labels.push([c + 1, "-∞"]);
  [...half].reverse().forEach(([t, o]) => labels.push([c + o, t]));
}
labels.push([623, "dB"]);
let prev = Y0;
for (const [y, text] of labels) {
  const gap = document.createElement("i");
  gap.style.flexGrow = y - prev;
  const s = document.createElement("span");
  s.textContent = text;
  scale.append(gap, s);
  prev = y;
  if (text !== "dB") shape(dbticks, "path", { d: `M0 ${y - Y0 - .5}H3`, stroke: "#ddd" });
}
const rest = document.createElement("i");
rest.style.flexGrow = 627 - prev;
scale.append(rest);

const lv = document.getElementById("lvscale");
for (let i = -72; i <= 0; i++) {
  const s = document.createElement("span");
  s.textContent = i === -72 ? "dB" : i;
  if (i === -72) s.className = "first";
  lv.appendChild(s);
}
```
